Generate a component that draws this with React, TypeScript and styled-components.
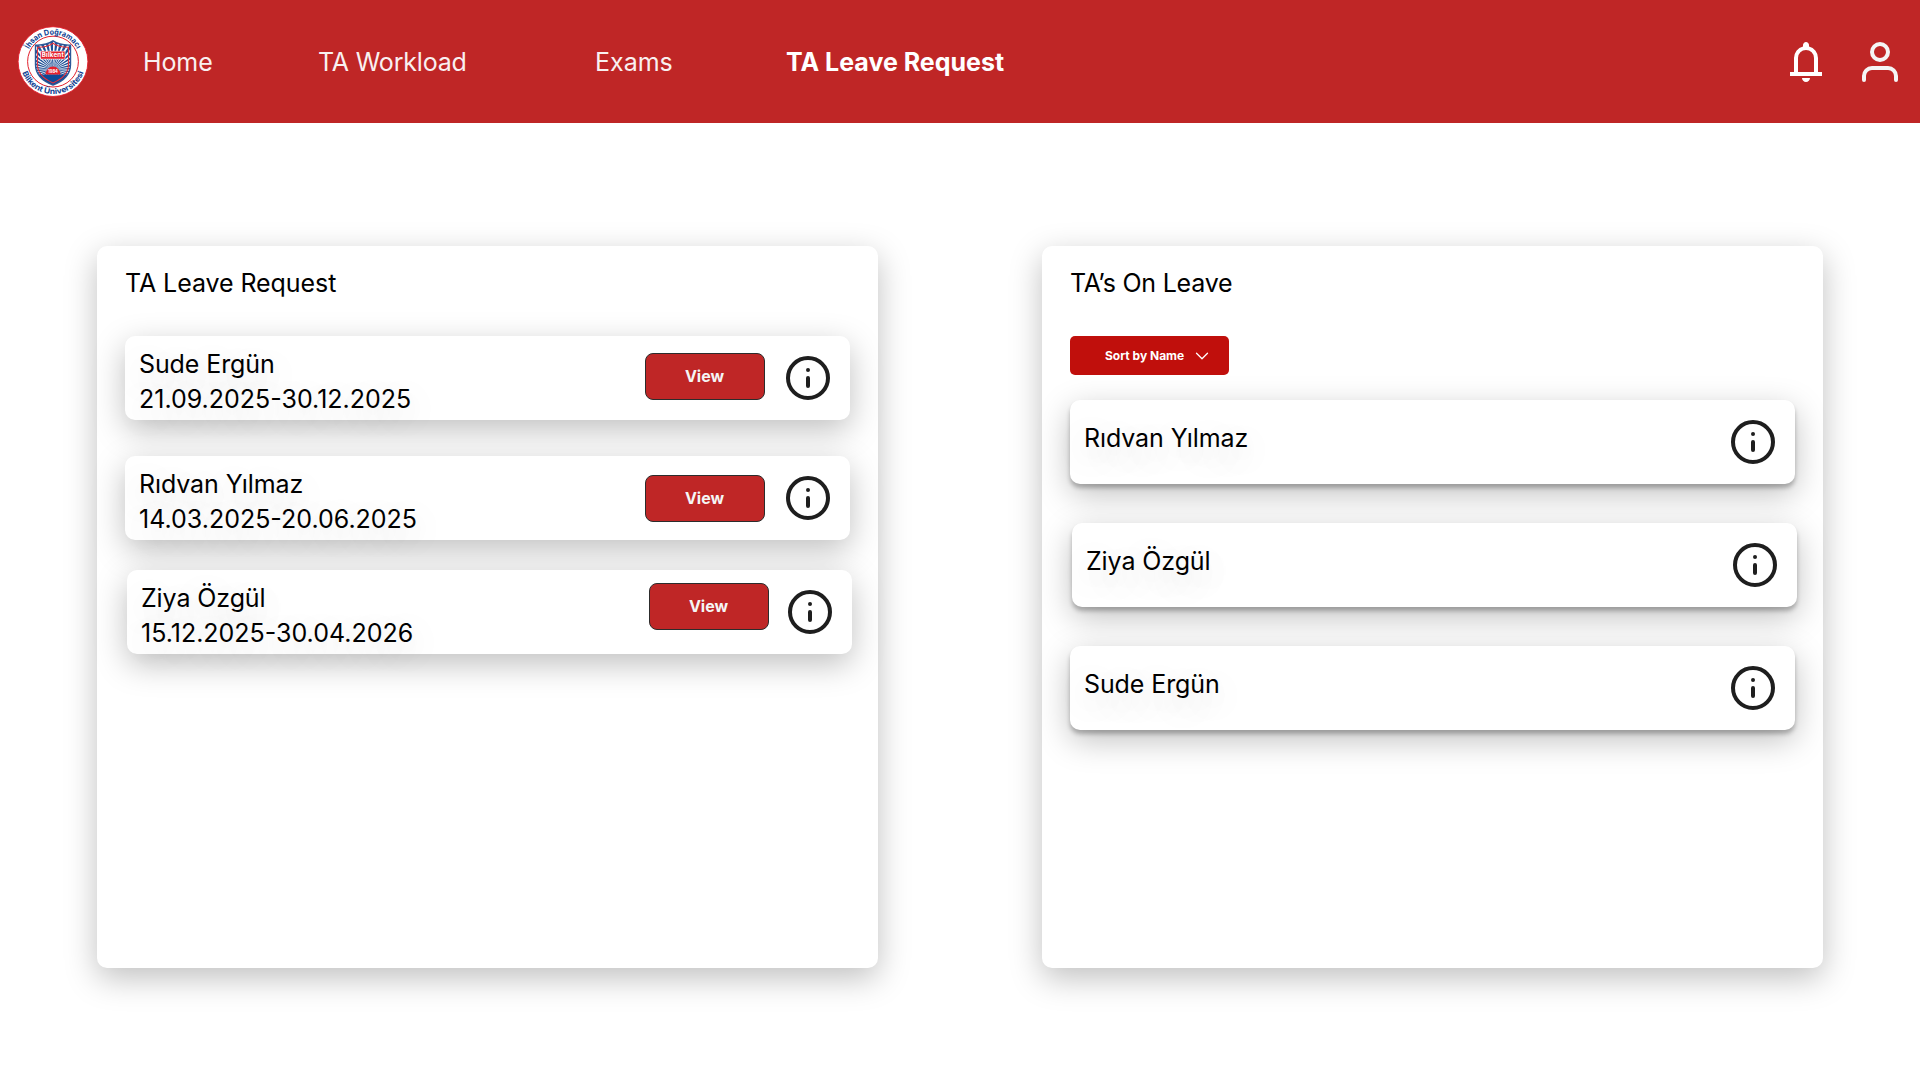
import React from "react";
import styled, { createGlobalStyle } from "styled-components";

const GlobalStyle = createGlobalStyle`
  *, *::before, *::after { box-sizing: border-box; }
  body {
    margin: 0;
    background: #fff;
    color: #000;
    font-family: Inter, "Liberation Sans", sans-serif;
    font-size: 25px;
    line-height: 35px;
  }
`;

const softShadow = "0 10px 32px rgba(0, 0, 0, 0.25)";

const Page = styled.div`
  width: 1920px;
  height: 1080px;
  overflow: hidden;
  background: #fff;
`;

const Header = styled.header`
  display: flex;
  align-items: center;
  height: 123px;
  padding: 0 16px 0 17px;
  background: #bf2626;
`;

const LogoSvg = styled.svg`
  flex: none;
  width: 72px;
  height: 72px;
`;

const Nav = styled.nav`
  display: grid;
  grid-template-columns: 175px 277px 191px auto;
  margin-left: 54px;
  padding-top: 2px;
`;

const NavLink = styled.a<{ $active?: boolean; $tracking?: number }>`
  color: ${(p) => (p.$active ? "#fff" : "#f9f0f0")};
  font-weight: ${(p) => (p.$active ? 700 : 400)};
  letter-spacing: ${(p) => p.$tracking ?? 0}px;
  text-decoration: none;
  white-space: nowrap;
`;

const HeaderIcons = styled.div`
  display: flex;
  gap: 26px;
  margin-left: auto;
`;

const Icon48 = styled.svg`
  display: block;
  flex: none;
  width: 48px;
  height: 48px;
`;

const Main = styled.main`
  display: flex;
  gap: 164px;
  padding: 123px 97px 0;
`;

const Panel = styled.section`
  width: 781px;
  height: 722px;
  padding: 20px 28px;
  border-radius: 10px;
  background: #fff;
  box-shadow: ${softShadow};
`;

const PanelTitle = styled.h2<{ $tracking: number }>`
  margin: 0 0 35px;
  font-size: 25px;
  font-weight: 400;
  line-height: 35px;
  letter-spacing: ${(p) => p.$tracking}px;
`;

const Card = styled.article<{ $top?: number; $shift?: number; $raised?: boolean }>`
  display: flex;
  align-items: flex-start;
  width: 725px;
  height: 84px;
  margin: ${(p) => p.$top ?? 0}px 0 0 ${(p) => p.$shift ?? 0}px;
  padding: 0 18px 0 14px;
  border-radius: 10px;
  background: #fff;
  box-shadow: ${(p) => (p.$raised ? `0 4px 4px rgba(0, 0, 0, 0.25), ${softShadow}` : softShadow)};
`;

const CardText = styled.div<{ $top: number }>`
  flex: 1;
  padding-top: ${(p) => p.$top}px;
  text-shadow: 0 10px 32px rgba(0, 0, 0, 0.21);
  white-space: nowrap;
`;

const Name = styled.div`
  letter-spacing: -0.1px;
`;

const ViewButton = styled.button<{ $top: number; $gap: number }>`
  width: 120px;
  height: 47px;
  margin: ${(p) => p.$top}px ${(p) => p.$gap}px 0 0;
  padding: 0 1px 1px 0;
  border: 1px solid #2c2c2c;
  border-radius: 8px;
  background: #bf2626;
  color: #f5f5f5;
  font: 700 16px/16px Inter, "Liberation Sans", sans-serif;
`;

const InfoSlot = styled.div`
  padding-top: 18px;
`;

const SortButton = styled.button`
  display: flex;
  align-items: center;
  gap: 11px;
  width: 159px;
  height: 39px;
  margin: 0 0 25px;
  padding: 0 0 0 35px;
  border: 0;
  border-radius: 5px;
  background: #c00f0c;
  color: #fff;
  font: 700 12px/16px Inter, "Liberation Sans", sans-serif;
`;

const Chevron = styled.svg`
  width: 14px;
  height: 8px;
`;

function InfoIcon() {
  return (
    <Icon48 viewBox="0 0 48 48" fill="none" stroke="#1e1e1e" strokeWidth="4" strokeLinecap="round">
      <circle cx="24" cy="24" r="20" />
      <path d="M24 32v-8M24 16h.02" />
    </Icon48>
  );
}

function BellIcon() {
  return (
    <Icon48 viewBox="0 0 24 24" fill="#fff">
      <path d="M4 19v-2h2v-7q0-2.075 1.25-3.687T10.5 4.2v-.7q0-.625.438-1.062T12 2t1.063.438T13.5 3.5v.7q2 .5 3.25 2.113T18 10v7h2v2zm8 3q-.825 0-1.412-.587T10 20h4q0 .825-.587 1.413T12 22m-4-5h8v-7q0-1.65-1.175-2.825T12 6 9.175 7.175 8 10z" />
    </Icon48>
  );
}

function UserIcon() {
  return (
    <Icon48 viewBox="0 0 48 48" fill="none" stroke="#f5f5f5" strokeWidth="4" strokeLinecap="round" strokeLinejoin="round">
      <path d="M40 42v-4a8 8 0 0 0-8-8H16a8 8 0 0 0-8 8v4" />
      <circle cx="24" cy="14" r="8" />
    </Icon48>
  );
}

const shield = "M18.500 19.500Q29 20 36 15.300Q43 20 53.500 19.500V39Q53.500 53 36 59.500Q18.500 53 18.500 39Z";
const rays = Array.from({ length: 36 }, (_, i) => {
  const a = (i * 10 * Math.PI) / 180;
  const b = a + 0.075;
  const r = 34;
  return `M36 44L${36 + r * Math.cos(a)} ${44 + r * Math.sin(a)}L${36 + r * Math.cos(b)} ${44 + r * Math.sin(b)}Z`;
}).join("");

function Logo() {
  return (
    <LogoSvg viewBox="0 0.4 72 72">
      <defs>
        <path id="arcTop" d="M9 36a27 27 0 0 1 54 0" />
        <path id="arcBottom" d="M3.500 36a32.500 32.500 0 0 0 65 0" />
        <clipPath id="shieldClip">
          <path d={shield} />
        </clipPath>
      </defs>
      <circle cx="36" cy="36" r="34.900" fill="#fff" stroke="#e21f2d" strokeWidth="0.900" />
      <circle cx="36" cy="36" r="25.400" fill="#fff" stroke="#e2202d" strokeWidth="1" />
      <g fill="#0f3f93" fontFamily="Inter, sans-serif" fontWeight="700" fontSize="7.700">
        <text textAnchor="middle" textLength="59" lengthAdjust="spacingAndGlyphs">
          <textPath href="#arcTop" startOffset="50%">İhsan Doğramacı</textPath>
        </text>
        <text textAnchor="middle" textLength="80" lengthAdjust="spacingAndGlyphs">
          <textPath href="#arcBottom" startOffset="50%">Bilkent Üniversitesi</textPath>
        </text>
      </g>
      <g clipPath="url(#shieldClip)">
        <rect x="18" y="14" width="36" height="47" fill="#1e5096" />
        <path d={rays} fill="#fff" />
        <path d="M18 49h36v12H18z" fill="#0c4a97" />
        <path d="M28.500 49a7.500 8 0 0 1 15 0z" fill="#e5212d" />
      </g>
      <path d={shield} fill="none" stroke="#2c5798" strokeWidth="1.400" />
      <path d="M20.500 21.700Q30 22 36 17.700Q42 22 51.500 21.700V39Q51.500 51 36 57.300Q20.500 51 20.500 39Z" fill="none" stroke="#e5333d" strokeWidth="1.100" />
      <rect x="23.500" y="25.500" width="24.500" height="8" fill="#e5212d" stroke="#fff" strokeWidth="0.600" />
      <g fill="#fff" fontFamily="Inter, sans-serif" fontWeight="700" textAnchor="middle">
        <text x="35.700" y="31.800" fontSize="6.200" textLength="22">Bilkent</text>
        <text x="36" y="47.200" fontSize="4.200" textLength="9.800">1984</text>
      </g>
    </LogoSvg>
  );
}

const requests = [
  { name: "Sude Ergün", dates: "21.09.2025-30.12.2025", top: 0, shift: 0, buttonTop: 17, buttonGap: 19 },
  { name: "Rıdvan Yılmaz", dates: "14.03.2025-20.06.2025", top: 36, shift: 0, buttonTop: 19, buttonGap: 19 },
  { name: "Ziya Özgül", dates: "15.12.2025-30.04.2026", top: 30, shift: 2, buttonTop: 13, buttonGap: 17 },
];

const onLeave = [
  { name: "Rıdvan Yılmaz", top: 0, shift: 0 },
  { name: "Ziya Özgül", top: 39, shift: 2 },
  { name: "Sude Ergün", top: 39, shift: 0 },
];

export default function App() {
  return (
    <Page>
      <GlobalStyle />
      <Header>
        <Logo />
        <Nav>
          <NavLink $tracking={-0.1}>Home</NavLink>
          <NavLink $tracking={-0.2}>TA Workload</NavLink>
          <NavLink>Exams</NavLink>
          <NavLink $active>TA Leave Request</NavLink>
        </Nav>
        <HeaderIcons>
          <BellIcon />
          <UserIcon />
        </HeaderIcons>
      </Header>
      <Main>
        <Panel>
          <PanelTitle $tracking={-0.07}>TA Leave Request</PanelTitle>
          {requests.map((r) => (
            <Card key={r.name} $top={r.top} $shift={r.shift}>
              <CardText $top={11}>
                <Name>{r.name}</Name>
                <div>{r.dates}</div>
              </CardText>
              <ViewButton $top={r.buttonTop} $gap={r.buttonGap}>View</ViewButton>
              <InfoSlot>
                <InfoIcon />
              </InfoSlot>
            </Card>
          ))}
        </Panel>
        <Panel>
          <PanelTitle $tracking={-0.22}>TA’s On Leave</PanelTitle>
          <SortButton>
            Sort by Name
            <Chevron viewBox="0 0 14 8" fill="none" stroke="#fff" strokeWidth="1.300" strokeLinecap="round" strokeLinejoin="round">
              <path d="M1.500 1.200L7 6.700L12.500 1.200" />
            </Chevron>
          </SortButton>
          {onLeave.map((t) => (
            <Card key={t.name} $top={t.top} $shift={t.shift} $raised>
              <CardText $top={21}>
                <Name>{t.name}</Name>
              </CardText>
              <InfoSlot>
                <InfoIcon />
              </InfoSlot>
            </Card>
          ))}
        </Panel>
      </Main>
    </Page>
  );
}
